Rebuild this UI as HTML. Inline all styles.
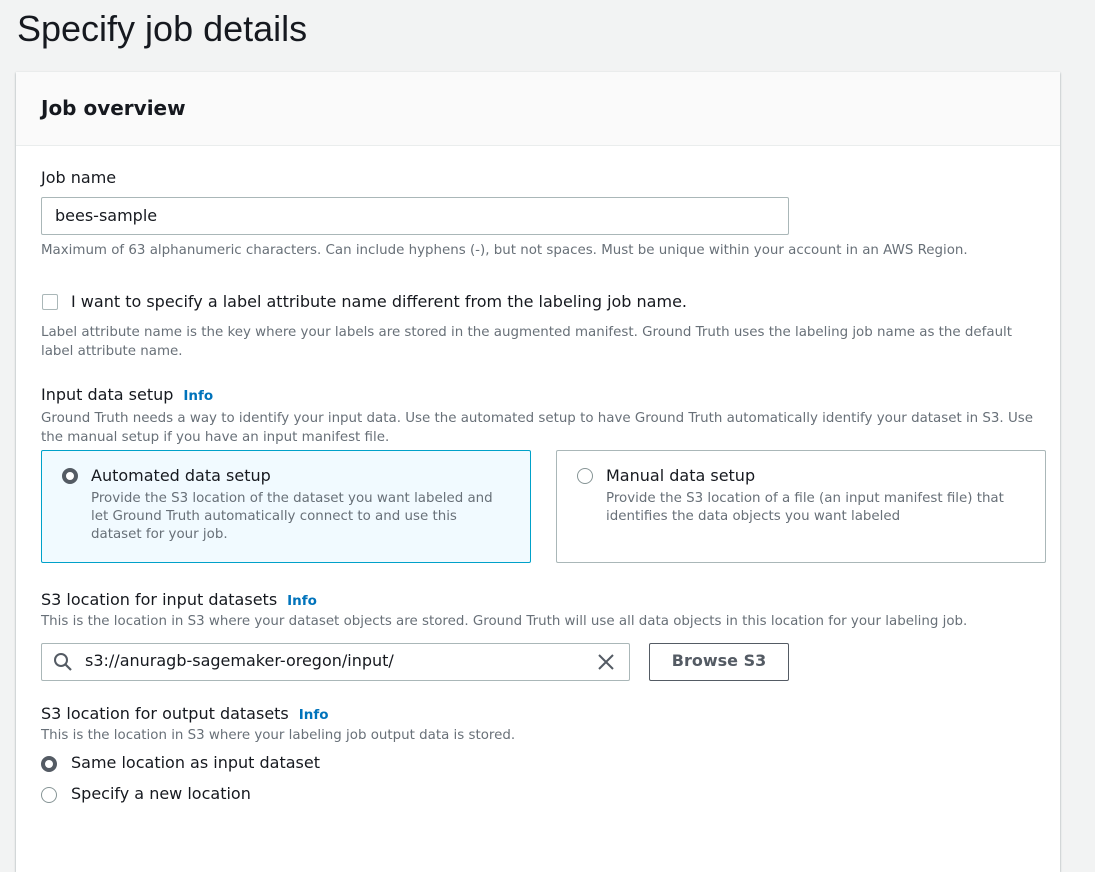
<!DOCTYPE html>
<html><head><style>
body{margin:0;width:1095px;height:829px;background:#f2f3f3;font-family:"DejaVu Sans","Liberation Sans",sans-serif;color:#16191f;position:relative;overflow:hidden}
.a{position:absolute;white-space:nowrap}
.s{font-size:13.4px;color:#687078}
.l{font-size:16px}
.i{font-size:13.5px;color:#0073bb;font-weight:bold;margin-left:10px}
.box{position:absolute;border:1px solid #aab7b8;border-radius:2px;background:#fff}
.radio{position:absolute;width:14px;height:14px;border-radius:50%;border:1px solid #879596;background:#fff}
.radio.on{border:4px solid #545b64;width:8px;height:8px}
</style></head><body>
<div class="a" style="left:17px;top:8px;font-size:36px;color:#16191f;font-family:'Liberation Sans',sans-serif">Specify job details</div>
<div style="position:absolute;left:16px;top:72px;width:1044px;height:800px;background:#fff;box-shadow:0 1px 2px rgba(0,28,36,.4)"></div>
<div style="position:absolute;left:16px;top:72px;width:1044px;height:73px;background:#fafafa;border-bottom:1px solid #eaeded"></div>
<div class="a" style="left:41px;top:96px;font-size:20px;font-weight:bold">Job overview</div>
<div class="a l" style="left:41px;top:168px">Job name</div>
<div class="box" style="left:41px;top:197px;width:746px;height:36px"></div>
<div class="a l" style="left:55px;top:206px">bees-sample</div>
<div class="a s" style="left:41px;top:243px">Maximum of 63 alphanumeric characters. Can include hyphens (-), but not spaces. Must be unique within your account in an AWS Region.</div>
<div class="box" style="left:42px;top:294px;width:14px;height:14px"></div>
<div class="a l" style="left:71px;top:292px">I want to specify a label attribute name different from the labeling job name.</div>
<div class="a s" style="left:41px;top:323px;line-height:19px">Label attribute name is the key where your labels are stored in the augmented manifest. Ground Truth uses the labeling job name as the default<br>label attribute name.</div>
<div class="a l" style="left:41px;top:385px">Input data setup<span class="i">Info</span></div>
<div class="a s" style="left:41px;top:409px;line-height:19px">Ground Truth needs a way to identify your input data. Use the automated setup to have Ground Truth automatically identify your dataset in S3. Use<br>the manual setup if you have an input manifest file.</div>
<div class="box" style="left:41px;top:450px;width:488px;height:111px;background:#f1faff;border-color:#00a1c9"></div>
<div class="radio on" style="left:62px;top:468px"></div>
<div class="a l" style="left:91px;top:466px">Automated data setup</div>
<div class="a s" style="left:91px;top:490px;line-height:18px">Provide the S3 location of the dataset you want labeled and<br>let Ground Truth automatically connect to and use this<br>dataset for your job.</div>
<div class="box" style="left:556px;top:450px;width:488px;height:111px"></div>
<div class="radio" style="left:577px;top:468px"></div>
<div class="a l" style="left:606px;top:466px">Manual data setup</div>
<div class="a s" style="left:606px;top:490px;line-height:18px">Provide the S3 location of a file (an input manifest file) that<br>identifies the data objects you want labeled</div>
<div class="a l" style="left:41px;top:590px">S3 location for input datasets<span class="i">Info</span></div>
<div class="a s" style="left:41px;top:614px">This is the location in S3 where your dataset objects are stored. Ground Truth will use all data objects in this location for your labeling job.</div>
<div class="box" style="left:41px;top:643px;width:587px;height:36px"></div>
<svg class="a" style="left:53px;top:652px" width="20" height="20" viewBox="0 0 20 20"><circle cx="8" cy="8" r="6" fill="none" stroke="#545b64" stroke-width="2"/><path d="M12.5 12.5L18 18" stroke="#545b64" stroke-width="2.2"/></svg>
<div class="a l" style="left:85px;top:651px">s3://anuragb-sagemaker-oregon/input/</div>
<svg class="a" style="left:597px;top:653px" width="18" height="18" viewBox="0 0 18 18"><path d="M2 2L16 16M16 2L2 16" stroke="#545b64" stroke-width="2"/></svg>
<div class="box" style="left:649px;top:643px;width:138px;height:36px;border-color:#545b64"></div>
<div class="a" style="left:649px;top:651px;width:140px;text-align:center;font-size:16px;font-weight:bold;color:#545b64">Browse S3</div>
<div class="a l" style="left:41px;top:704px">S3 location for output datasets<span class="i">Info</span></div>
<div class="a s" style="left:41px;top:728px">This is the location in S3 where your labeling job output data is stored.</div>
<div class="radio on" style="left:41px;top:756px"></div>
<div class="a l" style="left:71px;top:753px">Same location as input dataset</div>
<div class="radio" style="left:41px;top:787px"></div>
<div class="a l" style="left:71px;top:784px">Specify a new location</div>
</body></html>
